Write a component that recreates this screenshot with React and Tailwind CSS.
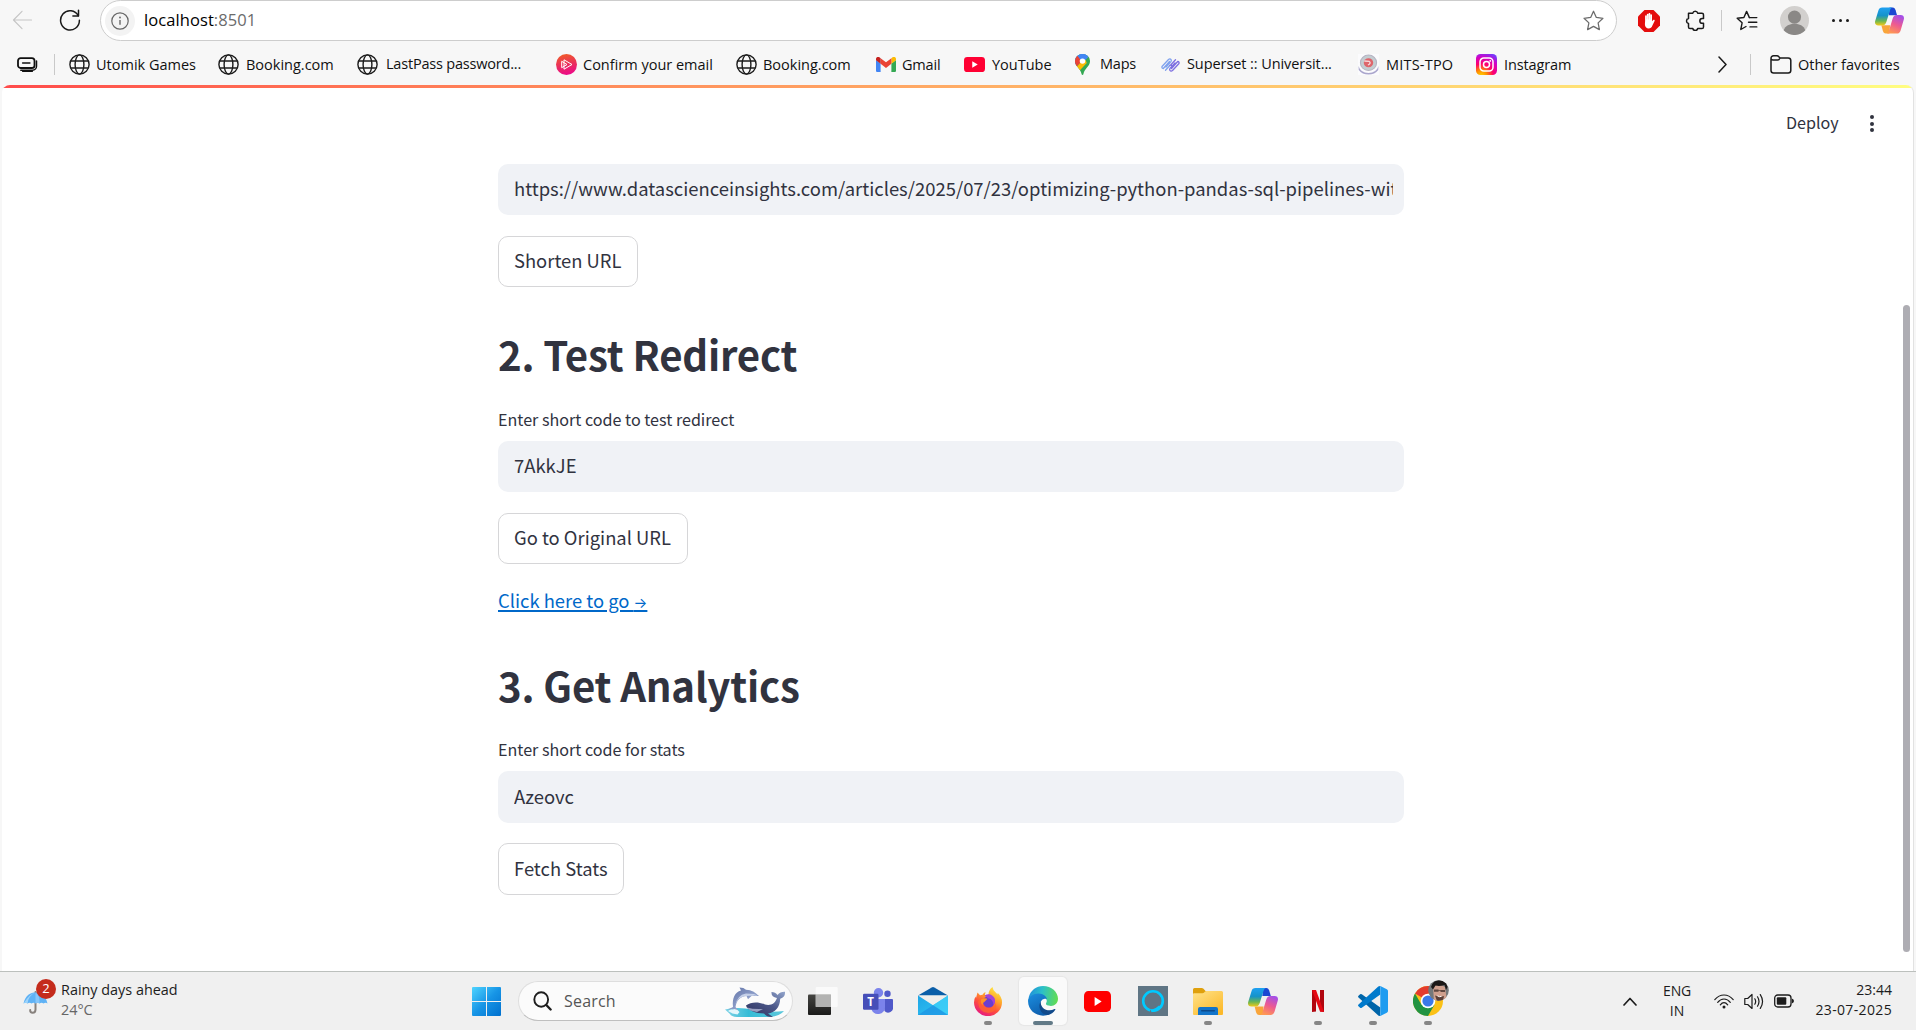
import React from 'react';

/* ---------- Toolbar icons ---------- */

const Globe = () => (
  <svg viewBox="0 0 21 21" className="h-[21px] w-[21px] shrink-0" fill="none" stroke="#1d1d1d" strokeWidth="1.4">
    <circle cx="10.5" cy="10.5" r="9.600" />
    <ellipse cx="10.500" cy="10.500" rx="4.400" ry="9.600" />
    <path d="M1.800 7h17.400M1.800 14h17.400" />
  </svg>
);

const BackArrow = () => (
  <svg viewBox="0 0 20 20" className="h-5 w-[21px] shrink-0" fill="none" stroke="#c6c6c6" strokeWidth="1.2" strokeLinecap="round" strokeLinejoin="round">
    <path d="M19 10H1M9.5 1.3L1 10l8.500 8.700" />
  </svg>
);

const Reload = () => (
  <svg viewBox="0 0 22 22" className="h-[22px] w-[22px] shrink-0" fill="none" stroke="#1a1a1a" strokeWidth="1.5" strokeLinecap="round" strokeLinejoin="round">
    <path d="M19.300 6.800A9.400 9.700 0 1 0 20.400 11.200" />
    <path d="M19.500 1.200v5.700h-5.600" />
  </svg>
);

const Collections = () => (
  <svg viewBox="0 0 21 16" className="h-4 w-[21px] shrink-0" fill="none" stroke="#111" strokeLinejoin="round" strokeLinecap="round">
    <rect x="1" y="1.200" width="16.500" height="9.800" rx="2.600" strokeWidth="1.800" />
    <path d="M5.600 6.100h7.300" strokeWidth="1.500" />
    <path d="M19.500 4v5.200a4 4 0 0 1-4 4H3.800" strokeWidth="1.500" />
    <path d="M5.500 14.500h10" strokeWidth="1" />
  </svg>
);

const Info = () => (
  <svg viewBox="0 0 18 18" className="h-[18px] w-[18px]" fill="none" stroke="#666" strokeWidth="1.200">
    <circle cx="9" cy="9" r="8.200" />
    <path d="M9 8v4.800" strokeWidth="1.400" />
    <circle cx="9" cy="5.500" r=".9" fill="#666" stroke="none" />
  </svg>
);

const STAR = 'M10 1.200l2.700 5.900 6.300.8-4.600 4.400 1.200 6.400L10 15.600l-5.600 3.100 1.200-6.400L1 7.900l6.300-.8z';

const Star = () => (
  <svg viewBox="0 0 20 20" className="h-[21px] w-[21px] shrink-0" fill="none" stroke="#6b6b6b" strokeWidth="1.200" strokeLinejoin="round">
    <path d={STAR} />
  </svg>
);

const FavoritesList = () => (
  <svg viewBox="0 0 22 21" className="h-[21px] w-[22px] shrink-0" fill="none" stroke="#1a1a1a" strokeWidth="1.400" strokeLinejoin="round" strokeLinecap="round">
    <path d="M13.400 7.600L10.600 1.400 7.900 7.500 1.200 8.300l4.900 4.500L4.800 19.500l5.200-3" />
    <path d="M13.400 7.600h7.400M12.500 12.200h8.300M14 16.900h6.800" />
  </svg>
);

const AdBlock = () => (
  <svg viewBox="0 0 22 22" className="h-[22px] w-[22px] shrink-0">
    <path d="M6.500 0h9L22 6.500v9L15.500 22h-9L0 15.500v-9z" fill="#e40d0d" />
    <path d="M7.100 11V6.300c0-1.300 1.600-1.300 1.700 0V4.700c0-1.300 1.700-1.300 1.700 0v-.6c0-1.400 1.800-1.400 1.800 0v1c0-1.300 1.700-1.300 1.700 0v6.200l1.200-1.300c.7-.7 1.800 0 1.400.9l-2.300 4.800c-.7 1.700-1.800 2.700-3.500 2.700-2.500 0-3.900-1.800-3.900-4.200z" fill="#fff" />
    <path d="M8.800 5.500v4M10.500 4.500v5M12.300 4.800v4.700" stroke="#f3a0a0" strokeWidth=".4" />
  </svg>
);

const Puzzle = () => (
  <svg viewBox="0 0 20 21" className="h-[21px] w-5 shrink-0" fill="none" stroke="#1a1a1a" strokeWidth="1.500" strokeLinejoin="round">
    <path d="M3.500 3.200h4.300a2.500 2.500 0 0 1 4.900 0h4.200q1.600 0 1.600 1.600v3.800h-1.300a2.300 2.300 0 0 0 0 4.700h1.300v3.600q0 1.600-1.600 1.600h-4.200a2.500 2.500 0 0 1-4.900 0H5.100q-1.600 0-1.600-1.600v-3.500a2.500 2.500 0 0 1 0-4.900z" />
  </svg>
);

const Avatar = () => (
  <svg viewBox="0 0 30 30" className="h-[29px] w-[29px] shrink-0">
    <circle cx="15" cy="15" r="15" fill="#d2d0ce" />
    <circle cx="15" cy="11.500" r="6.800" fill="#8a8886" />
    <path d="M3.800 25c1.700-4.600 6-6.700 11.200-6.700S24.500 20.400 26.200 25A15 15 0 0 1 3.800 25z" fill="#8a8886" />
  </svg>
);

const Copilot = ({ id, className }) => (
  <svg viewBox="0 0 30 27" className={className}>
    <defs>
      <linearGradient id={`${id}a`} x1="0" y1="0" x2="0" y2="1">
        <stop offset="0" stopColor="#1fa0f2" />
        <stop offset=".45" stopColor="#1593c9" />
        <stop offset=".75" stopColor="#6bb653" />
        <stop offset="1" stopColor="#f4ca16" />
      </linearGradient>
      <linearGradient id={`${id}b`} x1=".7" y1="0" x2=".3" y2="1">
        <stop offset="0" stopColor="#a44fe8" />
        <stop offset=".5" stopColor="#ed5a91" />
        <stop offset="1" stopColor="#ff9a52" />
      </linearGradient>
    </defs>
    <path d="M15 0h3.300c1.600 0 2.500 1.200 3 2.800l1.500 5.200h-8.500z" fill="#1b47d2" />
    <path d="M14.800 27h-3.700c-1.700 0-2.500-1.200-3-2.800l-1.500-5.700h9z" fill="#f9a53a" />
    <path d="M7.500 0h10.300c-1.300.5-1.900 1.700-2.400 3.300l-3.600 11.400c-.7 2.400-1.900 3.900-4.300 3.900H3.400C.6 18.600-.5 16.500.2 14L3.500 3.200C4.100 1.200 5.300 0 7.500 0z" fill={`url(#${id}a)`} />
    <path d="M22.500 27H12.200c1.300-.5 1.900-1.700 2.400-3.300l3.600-11.900c.7-2.400 1.900-3.900 4.300-3.900h4.100c2.800 0 3.900 2.100 3.200 4.600l-3.300 11.300c-.6 2-1.800 3.200-4 3.200z" fill={`url(#${id}b)`} />
  </svg>
);

/* ---------- Bookmark icons ---------- */

const Pluralsight = () => (
  <svg viewBox="0 0 21 21" className="h-[21px] w-[21px] shrink-0">
    <defs>
      <linearGradient id="ps" x1=".4" y1="0" x2=".6" y2="1">
        <stop offset="0" stopColor="#f05a2a" />
        <stop offset=".5" stopColor="#ea2f5c" />
        <stop offset="1" stopColor="#ec088c" />
      </linearGradient>
    </defs>
    <circle cx="10.500" cy="10.500" r="10.500" fill="url(#ps)" />
    <path d="M8 5.800l8 4.700-8 4.700zM5.700 7.300l5.300 3.200-5.300 3.200z" fill="none" stroke="#fff" strokeWidth="1" />
  </svg>
);

const Gmail = () => (
  <svg viewBox="0 0 20 15" className="h-[15px] w-5 shrink-0">
    <path d="M0 3v10.700C0 14.400.6 15 1.400 15h3.200V6.500z" fill="#4285f4" />
    <path d="M20 3v10.700c0 .7-.6 1.300-1.400 1.300h-3.200V6.500z" fill="#34a853" />
    <path d="M15.400 1.200v5.600L20 3.300V2c0-1.800-2-2.700-3.400-1.700z" fill="#fbbc04" />
    <path d="M4.600 6.800V1.200L10 5.300l5.400-4.100v5.600L10 10.900z" fill="#ea4335" />
    <path d="M0 2v1.300l4.600 3.500V1.200L3.400.3C2-.7 0 .2 0 2z" fill="#c5221f" />
  </svg>
);

const YouTube = ({ className, color }) => (
  <svg viewBox="0 0 28 20" preserveAspectRatio="none" className={className}>
    <rect width="28" height="20" rx="4.500" fill={color} />
    <path d="M11 5.800v8.400l7.300-4.200z" fill="#fff" />
  </svg>
);

const MapsPin = () => (
  <svg viewBox="0 0 14 21" preserveAspectRatio="none" className="h-[21px] w-[15px] shrink-0">
    <defs>
      <clipPath id="pin">
        <path d="M7 0a7 7 0 0 1 7 7.200c0 5.200-5 6.600-6.200 13-.2 1-1.400 1-1.600 0C5 13.800 0 12.400 0 7.200A7 7 0 0 1 7 0z" />
      </clipPath>
    </defs>
    <g clipPath="url(#pin)">
      <rect width="14" height="21" fill="#34a853" />
      <path d="M0 0h14L7 7.200 0 13z" fill="#4285f4" />
      <path d="M0 0l3 2.500L7 7 0 14z" fill="#ea4335" />
      <path d="M0 14.500L9.200 4 11 9 3.500 17.500z" fill="#fbbc04" />
      <path d="M2.500 1.800L5.500 0H9L12.500 3 7 9z" fill="#4285f4" />
    </g>
    <circle cx="7" cy="7.100" r="2.600" fill="#fff" />
  </svg>
);

const Superset = () => (
  <svg viewBox="0 0 19 16" className="h-4 w-[19px] shrink-0" fill="none" strokeWidth="1.300" strokeLinecap="round" strokeLinejoin="round">
    <path stroke="#7fa2ee" d="M1 9.500l6.500-7q1.500-1.300 2.600.2 .7 1-.3 2.200L5 10M1 9.500q-.5 1.800 1.300 2l6.200-7M4.500 13.300l4.600-5" />
    <path stroke="#7d6fe0" d="M18 6.500l-6.500 7q-1.500 1.300-2.600-.2-.7-1 .3-2.200L14 6M18 6.500q.5-1.800-1.300-2l-6.200 7M14.500 2.700l-4.600 5M9 8.300q1.500-1 1.500.5" />
  </svg>
);

const Mits = () => (
  <svg viewBox="0 0 20 21" preserveAspectRatio="none" className="h-[21px] w-[21px] shrink-0">
    <rect width="20" height="21" fill="#fbfbfd" />
    <path d="M.5 12q2 7 9.500 7t9.500-7l-.2 4Q16 20.500 10 20.500T.7 16z" fill="#aaa6cd" />
    <circle cx="10" cy="8.800" r="7.700" fill="#c3cdd1" stroke="#b5b3c2" strokeWidth="1" />
    <circle cx="10" cy="8.800" r="4.500" fill="#de656b" />
    <path d="M6 7l4.500.300Q13 9 9.500 11" stroke="#f6d9dc" strokeWidth="1.300" fill="none" />
  </svg>
);

const Instagram = () => (
  <svg viewBox="0 0 21 21" className="h-[21px] w-[21px] shrink-0">
    <defs>
      <radialGradient id="ig" cx=".25" cy="1.050" r="1.150">
        <stop offset="0" stopColor="#ffd600" />
        <stop offset=".25" stopColor="#ff8a00" />
        <stop offset=".5" stopColor="#ff0169" />
        <stop offset=".78" stopColor="#d300c5" />
        <stop offset="1" stopColor="#7638fa" />
      </radialGradient>
    </defs>
    <rect width="21" height="21" rx="4.500" fill="url(#ig)" />
    <rect x="4" y="4" width="13" height="13" rx="3.800" fill="none" stroke="#fff" strokeWidth="1.500" />
    <circle cx="10.500" cy="10.500" r="3" fill="none" stroke="#fff" strokeWidth="1.500" />
    <circle cx="14.200" cy="6.900" r=".9" fill="#fff" />
  </svg>
);

const Folder = () => (
  <svg viewBox="0 0 22 19" className="h-[19px] w-[22px] shrink-0" fill="none" stroke="#1a1a1a" strokeWidth="1.500" strokeLinejoin="round">
    <path d="M1 4v11.500A2.600 2.600 0 0 0 3.600 18h14.600a2.600 2.600 0 0 0 2.600-2.500V5.500A2.600 2.600 0 0 0 18.200 3H10L8.600 1.500Q8 .8 7 .8H3.600A2.600 2.600 0 0 0 1 3.500Q1 5 3 5h4.500Q8.600 5 9.200 4.200L10 3" />
  </svg>
);

/* ---------- Taskbar icons ---------- */

const Umbrella = () => (
  <svg viewBox="0 0 24 27" className="h-[27px] w-[25px]">
    <path d="M12 3v17.500q0 3.200-2.800 3.200T6.700 21" fill="none" stroke="#87817d" strokeWidth="2" strokeLinecap="round" />
    <path d="M0 14.500C2 6 7 3.500 12 3.500S22 6 24 14.500q-2-1.500-4 0-2-1.500-4 0-2-1.500-4 0-2-1.500-4 0-2-1.500-4 0-2-1.500-4 0z" fill="#5fb2f5" />
    <path d="M4 14.500q1-8 8-11Q6 5 0 14.500q2-1.500 4 0z" fill="#9ed4fb" />
    <path d="M12 3.500q4.500 3 4 11-2-1.500-4 0z" fill="#86c6fa" />
  </svg>
);

const WindowsLogo = () => (
  <svg viewBox="0 0 29 29" className="h-[29px] w-[29px]">
    <defs>
      <linearGradient id="win" x1="0" y1="0" x2="29" y2="29" gradientUnits="userSpaceOnUse">
        <stop offset="0" stopColor="#4fd4ff" />
        <stop offset=".5" stopColor="#1795e6" />
        <stop offset="1" stopColor="#0070ce" />
      </linearGradient>
    </defs>
    <path d="M1 0h13v14H0V1q0-1 1-1zM15 0h13q1 0 1 1v13H15zM0 15h14v14H1q-1 0-1-1zM15 15h14v13q0 1-1 1H15z" fill="url(#win)" />
  </svg>
);

const SearchGlass = () => (
  <svg viewBox="0 0 19 20" className="h-5 w-[19px] shrink-0" fill="none" stroke="#1e1e1e" strokeLinecap="round">
    <ellipse cx="8.200" cy="8.500" rx="6.900" ry="7.200" strokeWidth="1.900" />
    <path d="M13.300 14l4.300 4.500" strokeWidth="2.400" />
  </svg>
);

const SeaAnimals = () => (
  <svg viewBox="0 0 61 31" className="h-[31px] w-[61px] shrink-0">
    <defs>
      <linearGradient id="sea" x1="0" y1="0" x2="1" y2="0">
        <stop offset="0" stopColor="#7fd3e6" />
        <stop offset=".4" stopColor="#36bcd6" />
        <stop offset="1" stopColor="#5cc8dc" />
      </linearGradient>
      <linearGradient id="whale" x1="0" y1="1" x2="1" y2="0">
        <stop offset="0" stopColor="#2c2f5a" />
        <stop offset=".55" stopColor="#4a5688" />
        <stop offset="1" stopColor="#93a6cd" />
      </linearGradient>
      <linearGradient id="dolphin" x1="0" y1="0" x2="1" y2="1">
        <stop offset="0" stopColor="#5e6fa3" />
        <stop offset=".6" stopColor="#8fa0cb" />
        <stop offset="1" stopColor="#47507f" />
      </linearGradient>
    </defs>
    <path d="M0 22.500q13-3 29 .5 16 3 30 1-4 5-14 6H12Q6 29.500 5 27z" fill="url(#sea)" />
    <path d="M3 24q3-2.500 5-1.500l3-1 3.500 3.500-2 2.500-5-1z" fill="#e3f6fb" />
    <path d="M8 20C7 11 10 5 16 3.500L14.500.500Q19 .500 21 2.800C27 3 30 5.500 34 9q-4 .2-7-.5L23 12.300 21.500 9C15 9.500 11.500 13.500 10.500 20L13 23l-4-1-6 .5z" fill="url(#dolphin)" />
    <path d="M10 19q2-9 11-10l8-.5 4 .6-4-2.200-8-.4Q12 8 10 19z" fill="#c5d0e8" />
    <path d="M21 18.500c5-4 13-3.800 19-1 6 1.500 10-1 12-6.500Q46 10 46.500 5q4 0 6 3 3-3.500 7.500-3.200.5 5-4.800 7C55 20 50 26 43 26.500L48 30q-6 .5-9-3.500C31 26.500 22 23 21 18.500z" fill="url(#whale)" />
    <path d="M22 20.500q6 2 16 1.500-4 2-6 3-8-1-10-4.500z" fill="#b9bfdc" opacity=".75" />
  </svg>
);

const TaskView = () => (
  <svg viewBox="0 0 30 28" className="h-7 w-[30px]">
    <defs>
      <linearGradient id="tv" x1="0" y1="0" x2="0" y2="1">
        <stop offset="0" stopColor="#454542" />
        <stop offset="1" stopColor="#1b1b1a" />
      </linearGradient>
    </defs>
    <rect y="7.500" width="23" height="20.500" rx="1" fill="url(#tv)" />
    <rect x="7.700" y="0" width="22" height="20" rx="1" fill="#fff" opacity=".65" />
    <rect x="7.700" y="7.500" width="15.300" height="12.500" fill="#b3b3b2" />
  </svg>
);

const Teams = () => (
  <svg viewBox="0 0 30 27" className="h-[27px] w-[30px]">
    <circle cx="24.500" cy="5.800" r="3.200" fill="#5059c9" />
    <path d="M20 11h9q1 0 1 1v6.500a5 5 0 0 1-8.500 4.500z" fill="#5059c9" />
    <circle cx="15.500" cy="4.700" r="4.700" fill="#7b83eb" />
    <path d="M9.500 11H22v8.500a7 7 0 0 1-13.500 2z" fill="#7b83eb" />
    <rect y="5.700" width="15.500" height="16" rx="1.200" fill="#464eb8" />
    <text x="7.700" y="18" textAnchor="middle" className="fill-white text-[11.500px] font-bold" fontFamily="Open Sans">T</text>
  </svg>
);

const Mail = () => (
  <svg viewBox="0 0 30 28" className="h-7 w-[30px]">
    <defs>
      <linearGradient id="mail" x1="0" y1="0" x2="1" y2="1">
        <stop offset="0" stopColor="#1ea5e6" />
        <stop offset="1" stopColor="#32c5f4" />
      </linearGradient>
    </defs>
    <path d="M0 8.500L13.700.4q1.300-.7 2.600 0L30 8.500z" fill="#0a5ea8" />
    <path d="M1 8.500h28v10H1z" fill="#efeeec" />
    <path d="M0 8.500l15 9.700 15-9.700V28H0z" fill="url(#mail)" />
    <path d="M15 18.200L30 8.500V28z" fill="#3fd0f8" opacity=".75" />
    <path d="M0 28l15-9.800L30 28z" fill="#1c92e2" opacity=".7" />
  </svg>
);

const Firefox = () => (
  <svg viewBox="0 0 28 29" className="h-[29px] w-7">
    <defs>
      <linearGradient id="ff" x1=".8" y1="0" x2=".25" y2="1">
        <stop offset="0" stopColor="#fff04a" />
        <stop offset=".35" stopColor="#ffa72a" />
        <stop offset=".65" stopColor="#ff4f3c" />
        <stop offset="1" stopColor="#e31587" />
      </linearGradient>
    </defs>
    <path d="M3.500 5.500L6 8.200l2.500-.4q1.200-2 3-2.800L11 8q2 .3 3.500-.5Q14.500 3 18.500 0q.3 3 3 5.200 1.200 1 1.800 2.300l.5-1.500Q28 10 28 15.200A14 13.800 0 0 1 0 15.500Q0 12 1.500 9.500L2 11z" fill="url(#ff)" />
    <path d="M4 15q2-4.500 6-4l3 .5-3.500 2.800Q9 20 14.500 21q6 0 7-5 3 8-7 10Q5 26 4 15z" fill="#ff6a2c" opacity=".7" />
    <circle cx="14.800" cy="14.800" r="5.800" fill="#6a3ed1" />
    <path d="M10.500 8.500q6-3.500 10 2.500 1.500 4-1 7-.5-6-5-6.500z" fill="#a443d8" />
    <path d="M7 12.500q3-2 6.500-.8L10.300 15q-2 .5-1.500 3Q6 16 7 12.500z" fill="#ff9226" />
  </svg>
);

const Edge = () => (
  <svg viewBox="0 0 30 30" className="h-[30px] w-[30px]">
    <defs>
      <linearGradient id="eg1" x1="0" y1=".4" x2="1" y2=".5">
        <stop offset="0" stopColor="#1f8fdc" />
        <stop offset=".45" stopColor="#2cc0c8" />
        <stop offset="1" stopColor="#62dd52" />
      </linearGradient>
      <linearGradient id="eg2" x1="0" y1="0" x2=".5" y2="1">
        <stop offset="0" stopColor="#1c8fe0" />
        <stop offset="1" stopColor="#0e5fae" />
      </linearGradient>
    </defs>
    <path d="M.8 11C2.500 4.500 8.300 0 15 0c8.500 0 15 6 15 12.800 0 4.500-3.400 7.200-7 7.200-4 0-6-1.500-4.600-3.400C20 14 17 9.500 11.500 9 6 8.800 2 12 .3 15z" fill="url(#eg1)" />
    <path d="M.1 14C1.500 10.500 5 7.500 10.500 7.500c5 0 8.500 3.300 8.500 6 0-1-5.500-1.500-6.500 3.500-1 6 4.500 10 9.500 11C12 33-.9 26 .1 14z" fill="url(#eg2)" />
    <path d="M12.800 15.500C9.500 19.500 12 29 20 29c3-.5 5.500-2.500 7.300-5.200.4-.7-.2-1-.8-.7C20 26.500 12 22.500 12.800 15.500z" fill="#114a8b" />
  </svg>
);

const Alexa = () => (
  <svg viewBox="0 0 30 30" className="h-[30px] w-[30px]">
    <rect width="30" height="30" fill="#5f7584" />
    <circle cx="15" cy="15" r="9.800" fill="none" stroke="#00caff" strokeWidth="2.600" />
    <path d="M13.500 26.300V23.800Q18 22.500 21 19.500l1.500 1L18.500 25z" fill="#00caff" />
    <path d="M12.600 23.200l.9 3.500h-2z" fill="#5f7584" />
  </svg>
);

const Explorer = () => (
  <svg viewBox="0 0 30 27" className="h-[27px] w-[30px]">
    <defs>
      <linearGradient id="ex" x1="0" y1="0" x2=".8" y2="1">
        <stop offset="0" stopColor="#ffe38b" />
        <stop offset="1" stopColor="#fcb92a" />
      </linearGradient>
    </defs>
    <path d="M0 1.500Q0 0 1.500 0h7.200q1 0 1.800.8L12.500 3H17v6H0z" fill="#dfa00d" />
    <path d="M0 6.200q0-1 1-1h8.500q1 0 1.700-.8l.6-.6q.7-.8 1.700-.8h15q1.500 0 1.500 1.500V26q0 1-1 1H1q-1 0-1-1z" fill="url(#ex)" />
    <path d="M5 27v-6q0-2 2-2h16q2 0 2 2v6z" fill="#1374c9" />
    <rect x="8" y="22" width="14" height="1.500" rx=".7" fill="#0c4a8c" />
  </svg>
);

const Netflix = () => (
  <svg viewBox="0 0 12 22" className="h-[22px] w-3">
    <path d="M0 0h4v21.600L0 22zM8 0h4v22l-4-.4z" fill="#b1060f" />
    <path d="M0 0h4l8 22-4-.4z" fill="#e50914" />
  </svg>
);

const VSCode = () => (
  <svg viewBox="0 0 30 30" className="h-[30px] w-[30px]">
    <path d="M22.300 21.600L3.800 8.300q-.9-.6-1.700 0L.5 9.700q-.9.900 0 1.700L20.300 29.400q.7.600 1.700.6z" fill="#0065a9" />
    <path d="M22.300 8.400L3.800 21.700q-.9.600-1.700 0L.5 20.300q-.9-.9 0-1.700L20.300.6Q21 0 22 0z" fill="#007acc" />
    <path d="M20.500.6q1-.9 2.300-.3l6 2.900Q30 3.800 30 5v20q0 1.200-1.200 1.800l-6 2.900q-1.300.6-2.300-.3 1.800 1.200 1.800-1V1.600q0-2.200-1.800-1z" fill="#1f9cf0" />
  </svg>
);

const Chrome = () => (
  <svg viewBox="0 0 36 36" className="h-9 w-9">
    <circle cx="15" cy="21" r="15" fill="#fbc116" />
    <path d="M15 21L2 13.500A15 15 0 0 1 28 13.500H15z" fill="#e33b2e" />
    <path d="M2 13.500A15 15 0 0 0 15 36l6.500-11.200L15 21 8.500 24.700z" fill="#229342" />
    <circle cx="15" cy="21" r="7.300" fill="#fff" />
    <circle cx="15" cy="21" r="5.600" fill="#3b79e8" />
    <defs>
      <clipPath id="face"><circle cx="25.500" cy="10.500" r="10.300" /></clipPath>
    </defs>
    <g clipPath="url(#face)">
      <rect x="15" width="21" height="21" fill="#74787a" />
      <path d="M20 7q5-5 12 0l2 14H21z" fill="#cf9f8d" />
      <path d="M18 7Q20 0 27 0q7 1 7.500 7l-1.500 3-1.500-5q-5 1.500-9 .5l-2.500 4z" fill="#1b1716" />
      <path d="M21 9.500h4.500v2.200H21zM27.500 9.900H32v2.200h-4.500zM25 10h3v.7h-3z" fill="#3a2a27" opacity=".75" />
      <path d="M22 15.500q4 2 9 .5l-1 5h-6z" fill="#5b4038" />
      <path d="M24.500 15.800q2 1.500 4 .5" stroke="#fff" strokeWidth="1" fill="none" />
    </g>
  </svg>
);

const Wifi = () => (
  <svg viewBox="0 0 20 15" className="h-[15px] w-5 shrink-0" fill="none" stroke="#1c1c1c" strokeWidth="1.200" strokeLinecap="round">
    <path d="M.8 5.600Q4.800 1 10 1t9.200 4.600M3.700 8.300Q6.400 5 10 5t6.300 3.300M6.300 10.800Q8 8.700 10 8.700t3.700 2.100" />
    <circle cx="10" cy="13" r="1.500" fill="#1c1c1c" stroke="none" />
  </svg>
);

const Speaker = () => (
  <svg viewBox="0 0 20 17" className="h-[17px] w-5 shrink-0" fill="none" stroke="#1c1c1c" strokeWidth="1.200" strokeLinecap="round" strokeLinejoin="round">
    <path d="M.8 5.500h2.900L8 1.500v14l-4.300-4H.8z" />
    <path d="M10.800 5.800q1.700 2.700 0 5.400M13.500 3.800q3 4.700 0 9.400M16.300 1.600q4.500 6.900 0 13.800" />
  </svg>
);

const Battery = () => (
  <svg viewBox="0 0 20 14" className="h-[14px] w-5 shrink-0">
    <rect x=".7" y="1" width="16.300" height="12" rx="3" fill="none" stroke="#1c1c1c" strokeWidth="1.300" />
    <rect x="2.800" y="3.200" width="9.500" height="7.600" rx="1" fill="#1c1c1c" />
    <path d="M17.800 4.600q2.200.6 2.200 2.400t-2.200 2.400z" fill="#1c1c1c" />
  </svg>
);

/* ---------- Browser chrome ---------- */

const bookmarks = [
  { icon: <Globe />, label: 'Utomik Games', box: 'w-[149px] gap-[6px]', text: '' },
  { icon: <Globe />, label: 'Booking.com', box: 'w-[139px] gap-[7px]', text: '' },
  { icon: <Globe />, label: 'LastPass password...', box: 'w-[199px] gap-2', text: 'tracking-[-0.2px] pb-[2px]' },
  { icon: <Pluralsight />, label: 'Confirm your email', box: 'w-[180px] gap-[6px]', text: '' },
  { icon: <Globe />, label: 'Booking.com', box: 'w-[140px] gap-[6px]', text: '' },
  { icon: <Gmail />, label: 'Gmail', box: 'w-[88px] gap-[6px]', text: 'tracking-[-0.2px]' },
  { icon: <YouTube color="#ff0033" className="h-[15px] w-[21px] shrink-0" />, label: 'YouTube', box: 'w-[111px] gap-[7px]', text: '' },
  { icon: <MapsPin />, label: 'Maps', box: 'w-[86px] gap-[10px]', text: 'tracking-[-0.2px] pb-[2px]' },
  { icon: <Superset />, label: 'Superset :: Universit...', box: 'w-[197px] gap-[7px]', text: 'tracking-[-0.08px] pb-[2px]' },
  { icon: <Mits />, label: 'MITS-TPO', box: 'w-[118px] gap-[7px]', text: 'tracking-[0.2px]' },
  { icon: <Instagram />, label: 'Instagram', box: 'w-[242px] gap-[7px]', text: 'tracking-[-0.12px]' },
];

function AddressRow() {
  return (
    <div className="flex h-[41px] items-center">
      <div className="flex w-[100px] items-center gap-[26px] pb-px pl-3">
        <BackArrow />
        <Reload />
      </div>
      <div className="flex h-[41px] w-[1517px] items-center rounded-full border border-[#cdcdcd] bg-white pl-1 pr-[12px]">
        <div className="flex h-[30px] w-[30px] items-center justify-center rounded-full bg-[#f3f3f3]">
          <Info />
        </div>
        <div className="ml-[9px] flex-1 text-[16.500px] tracking-[0.08px] text-black">
          localhost<span className="text-[#6b6b6b]">:8501</span>
        </div>
        <Star />
      </div>
      <div className="flex flex-1 items-center">
        <div className="ml-[21px]"><AdBlock /></div>
        <div className="ml-[25px]"><Puzzle /></div>
        <div className="ml-4 h-[21px] w-px bg-[#c9c9c9]" />
        <div className="ml-[14px]"><FavoritesList /></div>
        <div className="ml-[22px]"><Avatar /></div>
        <div className="ml-[23px] flex gap-[4px]">
          <i className="h-[3px] w-[3px] rounded-full bg-[#1a1a1a]" />
          <i className="h-[3px] w-[3px] rounded-full bg-[#1a1a1a]" />
          <i className="h-[3px] w-[3px] rounded-full bg-[#1a1a1a]" />
        </div>
        <div className="ml-[26px]"><Copilot id="top" className="h-[27px] w-[29px]" /></div>
      </div>
    </div>
  );
}

function BookmarksBar() {
  return (
    <div className="flex h-11 items-center text-[14.500px] text-[#111]">
      <div className="flex w-[69px] items-center pl-[17px]">
        <div className="pt-[3px]"><Collections /></div>
        <div className="ml-4 mt-[3px] h-[21px] w-px bg-[#c9c9c9]" />
      </div>
      <div className="flex items-center pt-[3px]">
        {bookmarks.map((b, i) => (
          <div key={i} className={`flex h-[21px] shrink-0 items-center whitespace-nowrap ${b.box}`}>
            {b.icon}
            <span className={b.text}>{b.label}</span>
          </div>
        ))}
      </div>
      <svg viewBox="0 0 9 17" className="mt-[3px] h-[17px] w-[9px]" fill="none" stroke="#1a1a1a" strokeWidth="1.500" strokeLinecap="round" strokeLinejoin="round">
        <path d="M1 1l7 7.500L1 16" />
      </svg>
      <div className="ml-[23px] mt-[3px] h-[21px] w-px bg-[#c9c9c9]" />
      <div className="ml-[19px] mt-[3px] flex items-center gap-[6px]">
        <Folder />
        <span className="whitespace-nowrap tracking-[-0.02px]">Other favorites</span>
      </div>
    </div>
  );
}

/* ---------- Application page ---------- */

const TextField = ({ value, className = 'h-[51px]' }) => (
  <div className={`flex items-center rounded-[10px] bg-[#f0f2f6] pb-[3px] pl-4 pr-[11px] ${className}`}>
    <div className="min-w-0 flex-1 overflow-hidden whitespace-nowrap text-[18.460px] leading-8">{value}</div>
  </div>
);

const Button = ({ children, className }) => (
  <div className={`flex items-center rounded-[10px] border border-[#d6d6d8] bg-white pb-px pl-[15px] text-[18.400px] ${className}`}>
    {children}
  </div>
);

const Heading = ({ children, className }) => (
  <h2 className={`h-[60px] whitespace-nowrap text-[40.200px] font-bold leading-[60px] tracking-[-0.2px] ${className}`}>{children}</h2>
);

const Label = ({ children, className }) => (
  <div className={`mb-[10px] h-6 text-[16.130px] leading-6 ${className}`}>{children}</div>
);

function Page() {
  return (
    <div className="mx-[2px] flex h-[886px] w-[1912px] flex-col overflow-hidden rounded-t-[8px] border-r border-[#e2e2e2] bg-white font-['Noto_Sans_CJK_SC',sans-serif] text-[#31333f]">
      <div className="h-[3px] shrink-0 bg-linear-to-r from-[#ff4b4b] to-[#fffd80]" />
      <div className="flex min-h-0 flex-1">
        <div className="w-[496px]" />
        <main className="w-[906px] pt-[76px]">
          <TextField value="https://www.datascienceinsights.com/articles/2025/07/23/optimizing-python-pandas-sql-pipelines-with-duckdb" />
          <Button className="mt-[21px] h-[51px] w-[140px]">Shorten URL</Button>

          <Heading className="mt-[37px]">2. Test Redirect</Heading>
          <Label className="mt-[23px]">Enter short code to test redirect</Label>
          <TextField value="7AkkJE" />
          <Button className="mt-[21px] h-[51px] w-[190px]">Go to Original URL</Button>
          <div className="mt-[21px] h-[30px] text-[18.400px] leading-[30px]">
            <a className="text-[#0068c9] underline decoration-2 underline-offset-[2px]">
              Click here to go <span className="font-['Inter'] text-[14.500px]">→</span>
            </a>
          </div>

          <Heading className="mt-10">3. Get Analytics</Heading>
          <Label className="mt-[22px]">Enter short code for stats</Label>
          <TextField value="Azeovc" className="h-[52px]" />
          <Button className="mt-5 h-[52px] w-[126px]">Fetch Stats</Button>
        </main>
        <div className="flex flex-1 flex-col items-end pr-[3px]">
          <div className="flex h-[217px] w-[124px] items-start pt-[22px]">
            <span className="text-[16.130px] leading-6">Deploy</span>
            <div className="ml-[31px] mt-[5px] flex flex-col gap-[2.500px]">
              <i className="h-1 w-1 rounded-full bg-[#31333f]" />
              <i className="h-1 w-1 rounded-full bg-[#31333f]" />
              <i className="h-1 w-1 rounded-full bg-[#31333f]" />
            </div>
          </div>
          <div className="h-[647px] w-[7px] rounded-full bg-[#aeadb3]" />
        </div>
      </div>
    </div>
  );
}

/* ---------- Taskbar ---------- */

const apps = [
  { icon: <TaskView /> },
  { icon: <Teams /> },
  { icon: <Mail /> },
  { icon: <Firefox />, mark: 'w-2 bg-[#868686]' },
  { icon: <Edge />, mark: 'w-5 bg-[#627a87]', active: true },
  { icon: <YouTube color="#ff0000" className="h-[21px] w-[27px]" /> },
  { icon: <Alexa /> },
  { icon: <Explorer />, mark: 'w-2 bg-[#868686]' },
  { icon: <Copilot id="task" className="h-[27px] w-[30px]" /> },
  { icon: <Netflix />, mark: 'w-2 bg-[#868686]' },
  { icon: <VSCode />, mark: 'w-2 bg-[#868686]' },
  { icon: <div className="-mt-[6px] ml-[6px]"><Chrome /></div>, mark: 'w-2 bg-[#868686]' },
];

function Taskbar() {
  return (
    <div className="flex h-[59px] border-t border-[#bcc0bd] bg-[#f0f0f0] text-[#1c1c1c]">
      <div className="flex w-[472px] pl-[23px]">
        <div className="relative mt-[17px] w-[38px]">
          <Umbrella />
          <span className="absolute -top-[10px] left-[13px] flex h-5 w-5 items-center justify-center rounded-full bg-[#c42b1c] text-[13px] text-white">2</span>
        </div>
        <div className="pt-[8px] text-[14.400px] leading-5">
          <div>Rainy days ahead</div>
          <div className="text-[#666]">24°C</div>
        </div>
      </div>
      <div className="w-[46px] pt-[15px]"><WindowsLogo /></div>
      <div className="mt-[9px] flex h-10 w-[275px] items-center overflow-hidden rounded-full border border-b-[#bfbfbf] border-[#dedede] bg-[#fbfbfb] pl-[14px]">
        <SearchGlass />
        <span className="ml-3 flex-1 text-base tracking-[0.2px] text-[#555]">Search</span>
        <div className="mr-[6px] pt-[3px]"><SeaAnimals /></div>
      </div>
      <div className="ml-[2px] flex">
        {apps.map((a, i) => (
          <div key={i} className="flex w-[55px] flex-col items-center pt-[5px]">
            <div className={a.active ? 'flex h-12 w-12 flex-col items-center rounded-[5px] bg-[#fafafa] shadow-[0_0_1px_1px_#e6e6e6]' : 'flex h-12 w-12 flex-col items-center'}>
              <div className="flex h-[45px] items-center justify-center pt-[3px]">{a.icon}</div>
              {a.mark && <div className={`-mt-px h-1 shrink-0 rounded-full ${a.mark}`} />}
            </div>
          </div>
        ))}
      </div>
      <div className="flex flex-1 items-center justify-end">
        <svg viewBox="0 0 14 9" className="h-[9px] w-[14px]" fill="none" stroke="#1c1c1c" strokeWidth="1.700" strokeLinecap="round" strokeLinejoin="round">
          <path d="M1 8l6-6.500L13 8" />
        </svg>
        <div className="ml-[26px] w-7 text-center text-sm leading-5">
          <div className="-tracking-[0.2px]">ENG</div>
          <div>IN</div>
        </div>
        <div className="ml-[23px] flex items-center gap-[10px]">
          <Wifi />
          <Speaker />
          <Battery />
        </div>
        <div className="mr-[24px] w-[98px] pb-[2px] text-right text-sm leading-5">
          <div>23:44</div>
          <div className="tracking-[0.35px]">23-07-2025</div>
        </div>
      </div>
    </div>
  );
}

export default function App() {
  return (
    <div className="flex h-[1030px] w-[1916px] flex-col overflow-hidden bg-[#f7f7f7] font-['Open_Sans',sans-serif]">
      <AddressRow />
      <BookmarksBar />
      <Page />
      <Taskbar />
    </div>
  );
}
